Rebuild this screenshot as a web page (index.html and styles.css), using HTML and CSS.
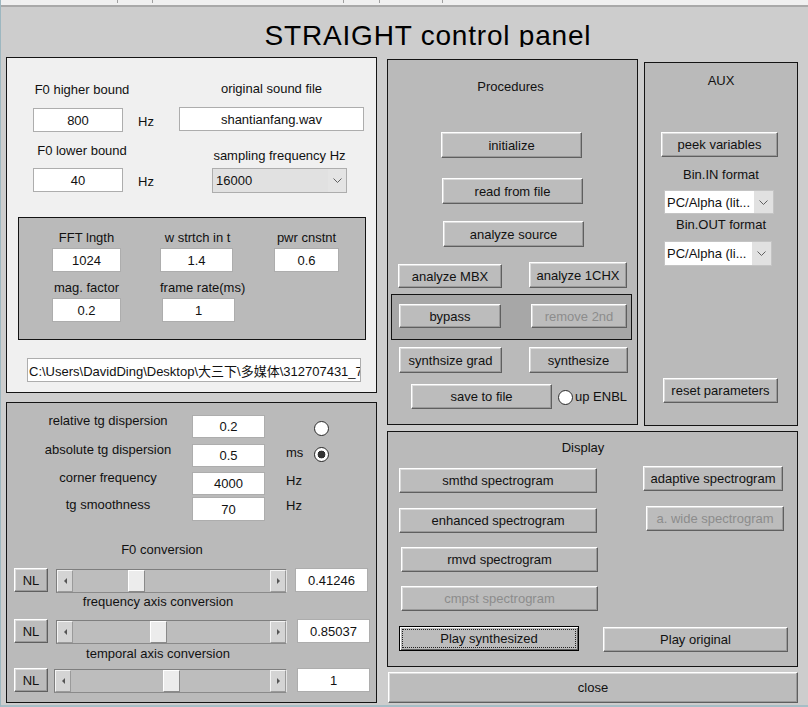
FILE: index.html
```html
<!DOCTYPE html>
<html lang="en">
<head>
<meta charset="utf-8">
<title>STRAIGHT control panel</title>
<link rel="stylesheet" href="styles.css">
</head>
<body>
<div class="window">
  <div class="topbar">
    <span class="tick t1"></span><span class="tick t2"></span><span class="tick t3"></span><span class="tick t4"></span><span class="tick t5"></span>
  </div>
  <div class="title">STRAIGHT control panel</div>

  <div class="main">
    <div class="col-left">
      <section class="panel light params">
        <div class="fields">
          <div class="f0group">
            <div class="lbl f0lbl">F0 higher bound</div>
            <div class="hzrow first"><div class="edit f0edit">800</div><div class="unit">Hz</div></div>
            <div class="lbl f0lbl second">F0 lower bound</div>
            <div class="hzrow"><div class="edit f0edit">40</div><div class="unit">Hz</div></div>
          </div>
          <div class="filegroup">
            <div class="lbl">original sound file</div>
            <div class="edit fileedit">shantianfang.wav</div>
            <div class="lbl sflbl">sampling frequency Hz</div>
            <div class="popup sfpop">
              <span class="ptxt">16000</span>
              <span class="parr"><svg width="9" height="5" viewBox="0 0 9 5"><path d="M0.5 0.5 L4.5 4.5 L8.5 0.5" fill="none" stroke="#606060" stroke-width="1"/></svg></span>
            </div>
          </div>
        </div>

        <div class="subpanel fft">
          <div class="fftcol c1">
            <div class="lbl">FFT lngth</div>
            <div class="edit">1024</div>
            <div class="lbl low">mag. factor</div>
            <div class="edit">0.2</div>
          </div>
          <div class="fftcol c2">
            <div class="lbl">w strtch in t</div>
            <div class="edit e-left">1.4</div>
            <div class="lbl low">frame rate(ms)</div>
            <div class="edit e-right">1</div>
          </div>
          <div class="fftcol c3">
            <div class="lbl">pwr cnstnt</div>
            <div class="edit">0.6</div>
          </div>
        </div>

        <div class="edit path">C:\Users\DavidDing\Desktop\大三下\多媒体\312707431_7</div>
      </section>

      <section class="panel dispersion">
        <div class="drow r1">
          <div class="lbl dlbl">relative tg dispersion</div>
          <div class="edit">0.2</div>
          <div class="dunit"></div>
          <span class="radio"></span>
        </div>
        <div class="drow r2">
          <div class="lbl dlbl">absolute tg dispersion</div>
          <div class="edit">0.5</div>
          <div class="dunit">ms</div>
          <span class="radio on"></span>
        </div>
        <div class="drow r3">
          <div class="lbl dlbl">corner frequency</div>
          <div class="edit">4000</div>
          <div class="dunit">Hz</div>
        </div>
        <div class="drow r4">
          <div class="lbl dlbl">tg smoothness</div>
          <div class="edit">70</div>
          <div class="dunit">Hz</div>
        </div>

        <div class="lbl convlbl">F0 conversion</div>
        <div class="srow srow1">
          <button class="btn nl">NL</button>
          <div class="slider">
            <span class="sarr"><span class="tri tri-l"></span></span>
            <span class="trough"><span class="thumb" style="margin-left:55px"></span></span>
            <span class="sarr"><span class="tri tri-r"></span></span>
          </div>
          <div class="edit val">0.41246</div>
        </div>
        <div class="lbl sublbl sub1">frequency axis conversion</div>
        <div class="srow srow2">
          <button class="btn nl">NL</button>
          <div class="slider">
            <span class="sarr"><span class="tri tri-l"></span></span>
            <span class="trough"><span class="thumb" style="margin-left:77px"></span></span>
            <span class="sarr"><span class="tri tri-r"></span></span>
          </div>
          <div class="edit val">0.85037</div>
        </div>
        <div class="lbl sublbl sub2">temporal axis conversion</div>
        <div class="srow srow3">
          <button class="btn nl">NL</button>
          <div class="slider">
            <span class="sarr"><span class="tri tri-l"></span></span>
            <span class="trough"><span class="thumb" style="margin-left:92px"></span></span>
            <span class="sarr"><span class="tri tri-r"></span></span>
          </div>
          <div class="edit val">1</div>
        </div>
      </section>
    </div>

    <div class="col-right">
      <div class="upper">
        <section class="panel procedures">
          <div class="lbl ptitle">Procedures</div>
          <button class="btn b-init">initialize</button>
          <button class="btn b-read">read from file</button>
          <button class="btn b-anal">analyze source</button>
          <div class="mbxrow">
            <button class="btn b-mbx">analyze MBX</button>
            <button class="btn b-1chx">analyze 1CHX</button>
          </div>
          <div class="subpanel bypass">
            <button class="btn b-bypass">bypass</button>
            <button class="btn dis b-rm">remove 2nd</button>
          </div>
          <div class="synrow">
            <button class="btn b-sg">synthsize grad</button>
            <button class="btn b-syn">synthesize</button>
          </div>
          <div class="saverow">
            <button class="btn b-save">save to file</button>
            <span class="radio"></span>
            <span class="enbl">up ENBL</span>
          </div>
        </section>

        <section class="panel aux">
          <div class="lbl auxtitle">AUX</div>
          <button class="btn b-peek">peek variables</button>
          <div class="lbl binlbl">Bin.IN format</div>
          <div class="popup white auxpop1">
            <span class="ptxt">PC/Alpha (lit...</span>
            <span class="parr"><svg width="9" height="5" viewBox="0 0 9 5"><path d="M0.5 0.5 L4.5 4.5 L8.5 0.5" fill="none" stroke="#606060" stroke-width="1"/></svg></span>
          </div>
          <div class="lbl binout">Bin.OUT format</div>
          <div class="popup white auxpop2">
            <span class="ptxt">PC/Alpha (li...</span>
            <span class="parr"><svg width="9" height="5" viewBox="0 0 9 5"><path d="M0.5 0.5 L4.5 4.5 L8.5 0.5" fill="none" stroke="#606060" stroke-width="1"/></svg></span>
          </div>
          <button class="btn b-reset">reset parameters</button>
        </section>
      </div>

      <section class="panel display">
        <div class="lbl disptitle">Display</div>
        <div class="dispbody">
          <div class="dcol-l">
            <button class="btn b-smthd">smthd spectrogram</button>
            <button class="btn b-enh">enhanced spectrogram</button>
            <button class="btn b-rmvd">rmvd spectrogram</button>
            <button class="btn dis b-cmpst">cmpst spectrogram</button>
          </div>
          <div class="dcol-r">
            <button class="btn b-adapt">adaptive spectrogram</button>
            <button class="btn dis b-wide">a. wide spectrogram</button>
          </div>
        </div>
        <div class="playrow">
          <button class="btn focus b-psyn">Play synthesized</button>
          <button class="btn b-porig">Play original</button>
        </div>
      </section>

      <button class="btn b-close">close</button>
    </div>
  </div>
</div>
</body>
</html>
```

FILE: styles.css
```css
* { box-sizing: border-box; }
html, body { margin: 0; padding: 0; }
body {
  width: 808px;
  height: 707px;
  overflow: hidden;
  background: #cdcdcd;
  font-family: "Liberation Sans", Arial, "Noto Sans CJK SC", sans-serif;
  font-size: 13px;
  color: #111;
}
.window {
  width: 808px;
  height: 707px;
  background: #cdcdcd;
  border-left: 1px solid #9db7c0;
  border-bottom: 2px solid #a6bec6;
  overflow: hidden;
}

/* top strip */
.topbar {
  height: 7px;
  background: #f0f0f0;
  border-bottom: 2px solid #a9a9a9;
  display: flex;
  align-items: flex-start;
}
.tick { width: 1px; height: 3px; background: #a0a0a0; flex: none; }
.t1 { margin-left: 116px; }
.t2 { margin-left: 34px; }
.t3 { margin-left: 190px; }
.t4 { margin-left: 35px; }
.t5 { margin-left: 62px; }

.title {
  margin-top: 15px;
  height: 25px;
  overflow: hidden;
  font-size: 28px;
  line-height: 28px;
  letter-spacing: 0.8px;
  text-align: center;
  padding-left: 47px;
  color: #000;
  white-space: nowrap;
}

.main {
  display: grid;
  grid-template-columns: 371px 411px;
  column-gap: 10px;
  align-items: start;
  padding-left: 5px;
  margin-top: 10px;
  width: 807px;
}

/* generic widgets */
.panel { border: 1px solid #141414; background: #bababa; }
.panel.light { background: #f0f0f0; }
.subpanel { border: 1px solid #141414; background: #bababa; }
.lbl { line-height: 16px; text-align: center; white-space: nowrap; }

.edit {
  background: #fff;
  border: 1px solid #adadad;
  height: 24px;
  display: flex;
  align-items: center;
  justify-content: center;
  white-space: nowrap;
  overflow: hidden;
  flex: none;
}

.popup {
  display: flex;
  height: 25px;
  border: 1px solid #adadad;
  background: #e1e1e1;
  flex: none;
}
.popup.white { background: #fff; border-color: #c4c4c4; }
.ptxt {
  flex: 1;
  padding-left: 2px;
  display: flex;
  align-items: center;
  white-space: nowrap;
  overflow: hidden;
}
.parr {
  width: 18px;
  display: flex;
  align-items: center;
  justify-content: center;
  background: #e4e4e4;
  flex: none;
}
.popup.white .parr { width: 19px; background: #e1e1e1; }

.btn {
  appearance: none;
  margin: 0;
  padding: 0;
  font: inherit;
  color: #111;
  background: #bcbcbc;
  border: 1px solid;
  border-color: #fff #5f5f5f #5f5f5f #fff;
  box-shadow: inset -1px -1px 0 #9a9a9a, inset 1px 1px 0 #dcdcdc;
  display: flex;
  align-items: center;
  justify-content: center;
  white-space: nowrap;
  flex: none;
}
.btn.dis { color: #8c8c8c; }
.btn.focus {
  border-color: #000;
  box-shadow: inset 1px 1px 0 #fff, inset -1px -1px 0 #5f5f5f;
  outline: 1px dotted #222;
  outline-offset: -4px;
}

.radio {
  width: 15px;
  height: 15px;
  border-radius: 50%;
  border: 1px solid #2a2a2a;
  background: #fff;
  flex: none;
}
.radio.on { background: radial-gradient(circle, #333 0 3.6px, #fff 4.2px); }

/* ---- left column ---- */
.col-left { width: 371px; display: flex; flex-direction: column; }
.params { height: 336px; width: 371px; }
.fields { display: flex; align-items: flex-start; }
.f0group { margin-left: 26px; margin-top: 24px; width: 130px; flex: none; }
.f0lbl { width: 98px; }
.f0lbl.second { margin-top: 11px; }
.hzrow { display: flex; margin-top: 9px; }
.hzrow.first { margin-top: 10px; }
.f0edit { width: 90px; }
.unit { margin-left: 15px; padding-top: 6px; line-height: 16px; }
.filegroup { margin-left: 16px; margin-top: 23px; width: 185px; flex: none; }
.fileedit { margin-top: 10px; width: 185px; }
.sflbl { margin-top: 17px; margin-left: 33px; width: 135px; }
.sfpop { margin-top: 4px; margin-left: 33px; width: 135px; }
.sfpop .ptxt { padding-left: 3px; }

.fft {
  margin-top: 24px;
  margin-left: 11px;
  width: 348px;
  height: 123px;
  display: flex;
  align-items: flex-start;
  gap: 39px;
  padding: 12px 0 0 33px;
}
.fftcol { display: flex; flex-direction: column; flex: none; }
.c1 { width: 69px; }
.c2 { width: 75px; }
.c3 { width: 65px; }
.fftcol .edit { margin-top: 2px; }
.fftcol .lbl.low { margin-top: 8px; }
.c2 .e-left { width: 73px; align-self: flex-start; }
.c2 .e-right { width: 73px; align-self: flex-end; }

.path {
  margin-top: 18px;
  margin-left: 20px;
  width: 334px;
  justify-content: flex-start;
  padding-left: 1px;
}

.dispersion { margin-top: 9px; height: 301px; width: 371px; padding-top: 12px; }
.drow { display: flex; align-items: flex-start; height: 23px; }
.r2 { margin-top: 6px; }
.r3 { margin-top: 5px; }
.r4 { margin-top: 2px; height: 24px; }
.dlbl { width: 136px; margin-left: 33px; margin-top: -2px; flex: none; }
.r4 .dlbl { margin-top: 0; }
.drow .edit { margin-left: 16px; width: 73px; height: 100%; }
.dunit { margin-left: 21px; width: 28px; margin-top: 1px; line-height: 16px; flex: none; }
.r1 .radio { margin-top: 6px; }
.r2 .radio { margin-top: 3px; }

.convlbl { margin-top: 21px; margin-left: 7px; width: 296px; }
.sublbl { margin-left: 7px; width: 288px; }
.sub1 { margin-top: 2px; }
.sub2 { margin-top: 3px; }
.srow { display: flex; align-items: flex-start; height: 24px; }
.srow1 { margin-top: 10px; }
.srow2 { margin-top: 9px; }
.srow3 { margin-top: 6px; }
.btn.nl { margin-left: 7px; width: 34px; height: 24px; }
.slider {
  display: flex;
  height: 24px;
  margin-top: 1px;
  margin-left: 8px;
  width: 231px;
  border: 1px solid;
  border-color: #7e7e7e #e4e4e4 #8a8a8a #7e7e7e;
  background: #bdbdbd;
  flex: none;
}
.srow3 .slider { margin-left: 6px; width: 233px; }
.sarr {
  width: 16px;
  background: #d4d4d4;
  border: 1px solid;
  border-color: #f4f4f4 #9a9a9a #9a9a9a #f4f4f4;
  display: flex;
  align-items: center;
  justify-content: center;
  flex: none;
}
.tri { width: 0; height: 0; border-top: 3px solid transparent; border-bottom: 3px solid transparent; }
.tri-l { border-right: 3px solid #555; }
.tri-r { border-left: 3px solid #555; }
.trough { flex: 1; display: flex; }
.thumb {
  width: 17px;
  height: 100%;
  background: #ececec;
  border: 1px solid;
  border-color: #fff #8a8a8a #8a8a8a #fff;
  flex: none;
}
.val { width: 73px; margin-left: 8px; }
.srow2 .val, .srow3 .val { margin-left: 10px; }

/* ---- right column ---- */
.col-right { width: 411px; display: flex; flex-direction: column; align-items: flex-start; }
.upper { display: flex; align-items: flex-start; }

.procedures {
  margin-top: 2px;
  width: 251px;
  height: 366px;
  display: flex;
  flex-direction: column;
  align-items: flex-start;
  flex: none;
}
.ptitle { width: 100%; margin-top: 19px; padding-right: 4px; }
.b-init { margin-top: 37px; margin-left: 53px; width: 141px; height: 26px; }
.b-read { margin-top: 20px; margin-left: 54px; width: 141px; height: 26px; }
.b-anal { margin-top: 17px; margin-left: 55px; width: 141px; height: 26px; }
.mbxrow { display: flex; align-items: flex-start; margin-top: 15px; }
.b-mbx { margin-left: 10px; margin-top: 2px; width: 104px; height: 24px; }
.b-1chx { margin-left: 27px; width: 98px; height: 26px; }
.bypass {
  margin-top: 6px;
  margin-left: 3px;
  width: 241px;
  height: 46px;
  background: #a7a7a7;
  display: flex;
  align-items: flex-start;
  padding-top: 9px;
}
.b-bypass { margin-left: 7px; width: 102px; height: 24px; }
.b-rm { margin-left: 30px; width: 96px; height: 24px; }
.synrow { display: flex; align-items: flex-start; margin-top: 7px; }
.b-sg { margin-left: 11px; width: 103px; height: 26px; }
.b-syn { margin-left: 27px; width: 99px; height: 26px; }
.saverow { display: flex; align-items: flex-start; margin-top: 11px; }
.b-save { margin-left: 23px; width: 141px; height: 25px; }
.saverow .radio { margin-left: 6px; margin-top: 6px; }
.enbl { margin-left: 2px; margin-top: 5px; line-height: 16px; white-space: nowrap; }

.aux {
  margin-left: 6px;
  margin-top: 5px;
  width: 154px;
  height: 364px;
  display: flex;
  flex-direction: column;
  align-items: flex-start;
  flex: none;
}
.auxtitle { width: 100%; margin-top: 10px; }
.b-peek { margin-top: 43px; margin-left: 16px; width: 117px; height: 25px; }
.binlbl { width: 100%; margin-top: 10px; }
.auxpop1 { margin-top: 7px; margin-left: 19px; width: 110px; height: 24px; }
.binout { width: 100%; margin-top: 3px; }
.auxpop2 { margin-top: 8px; margin-left: 19px; width: 108px; height: 25px; }
.b-reset { margin-top: 112px; margin-left: 18px; width: 115px; height: 25px; }

.display {
  margin-top: 5px;
  width: 411px;
  height: 236px;
  display: flex;
  flex-direction: column;
  align-items: flex-start;
}
.disptitle { width: 100%; margin-top: 8px; padding-right: 19px; }
.dispbody { display: flex; align-items: flex-start; }
.dcol-l { margin-left: 11px; display: flex; flex-direction: column; align-items: flex-start; flex: none; }
.dcol-r { margin-left: 45px; display: flex; flex-direction: column; align-items: flex-start; flex: none; }
.b-smthd { margin-top: 12px; width: 198px; height: 25px; }
.b-enh { margin-top: 15px; width: 198px; height: 25px; }
.b-rmvd { margin-top: 14px; margin-left: 2px; width: 197px; height: 25px; }
.b-cmpst { margin-top: 14px; margin-left: 2px; width: 197px; height: 25px; }
.b-adapt { margin-top: 10px; width: 140px; height: 25px; }
.b-wide { margin-top: 15px; margin-left: 3px; width: 138px; height: 25px; }
.playrow { display: flex; align-items: flex-start; margin-top: 15px; margin-left: 11px; }
.b-psyn { width: 180px; height: 25px; }
.b-porig { margin-left: 24px; margin-top: 1px; width: 185px; height: 25px; }

.b-close { margin-top: 5px; margin-left: 1px; width: 410px; height: 31px; }
```
